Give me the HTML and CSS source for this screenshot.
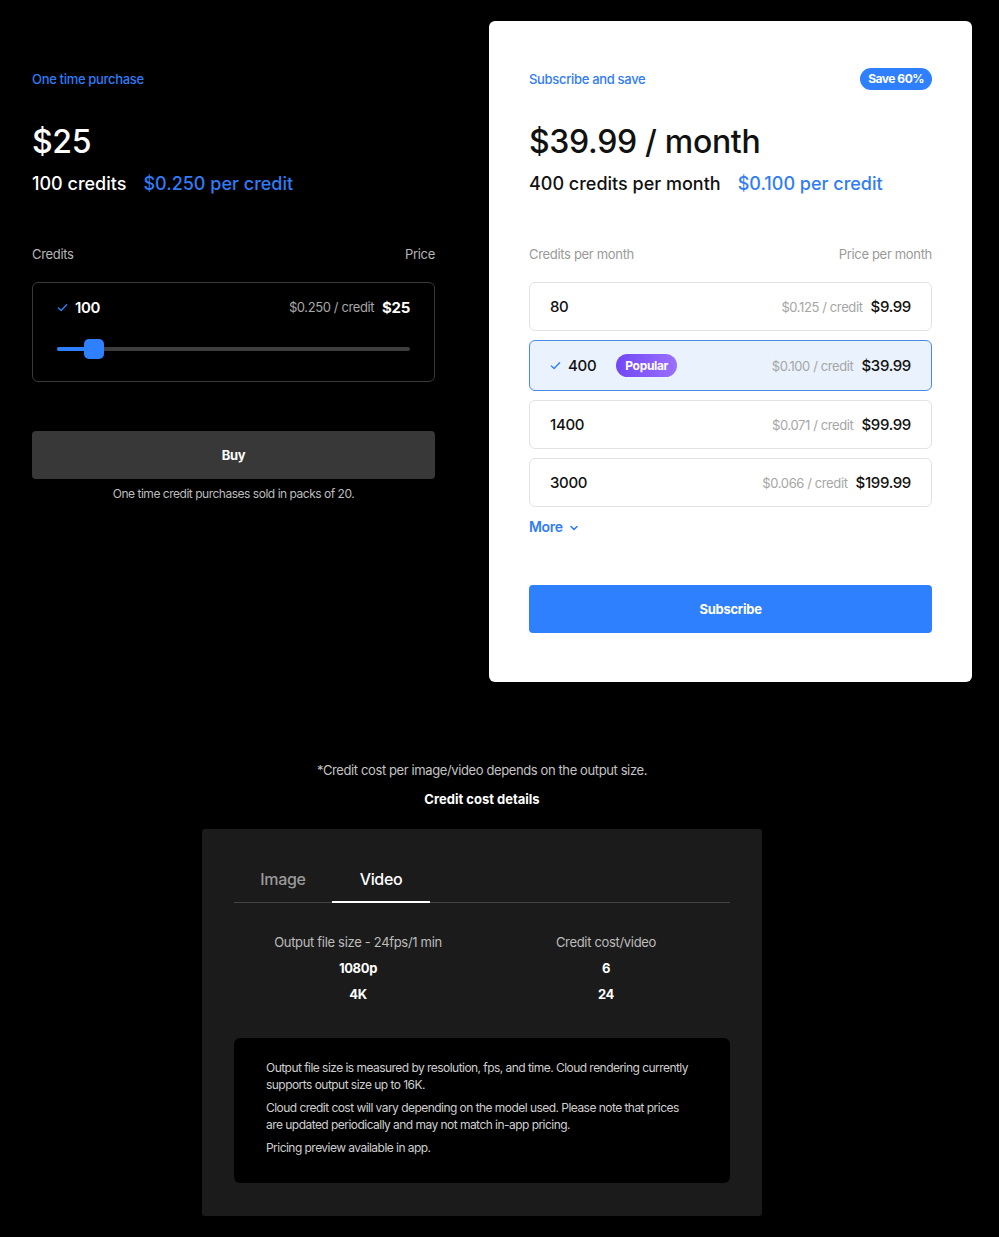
FILE: index.html
```html
<!DOCTYPE html>
<html lang="en">
<head>
<meta charset="utf-8">
<title>Pricing</title>
<link rel="stylesheet" href="styles.css">
</head>
<body>
<main class="page">
  <section class="plans">
    <div class="plan plan-once">
      <div class="plan-head">
        <span class="eyebrow">One time purchase</span>
      </div>
      <div class="price-big">$25</div>
      <div class="price-sub"><span class="qty">100 credits</span><span class="per">$0.250 per credit</span></div>
      <div class="labels"><span>Credits</span><span>Price</span></div>
      <div class="slider-box">
        <div class="slider-row">
          <span class="sel-left"><svg class="check" viewBox="0 0 12 12" width="11" height="11"><path d="M1.5 6.5 L4.5 9.2 L10.5 3" fill="none" stroke="currentColor" stroke-width="1.5" stroke-linecap="round" stroke-linejoin="round"/></svg><span class="num">100</span></span>
          <span class="sel-right"><span class="unit">$0.250 / credit</span><span class="amt">$25</span></span>
        </div>
        <div class="track"><div class="fill" style="width: 37px"></div><div class="thumb"></div></div>
      </div>
      <button class="btn btn-buy">Buy</button>
      <p class="pack-note">One time credit purchases sold in packs of 20.</p>
    </div>

    <div class="plan plan-sub">
      <div class="plan-head">
        <span class="eyebrow">Subscribe and save</span>
        <span class="save-pill">Save 60%</span>
      </div>
      <div class="price-big">$39.99 / month</div>
      <div class="price-sub"><span class="qty">400 credits per month</span><span class="per">$0.100 per credit</span></div>
      <div class="labels"><span>Credits per month</span><span>Price per month</span></div>
      <ul class="options">
        <li class="opt"><span class="sel-left"><span class="num">80</span></span><span class="sel-right"><span class="unit">$0.125 / credit</span><span class="amt">$9.99</span></span></li>
        <li class="opt opt-active"><span class="sel-left"><svg class="check" viewBox="0 0 12 12" width="11" height="11"><path d="M1.5 6.5 L4.5 9.2 L10.5 3" fill="none" stroke="currentColor" stroke-width="1.5" stroke-linecap="round" stroke-linejoin="round"/></svg><span class="num">400</span><span class="popular">Popular</span></span><span class="sel-right"><span class="unit">$0.100 / credit</span><span class="amt">$39.99</span></span></li>
        <li class="opt"><span class="sel-left"><span class="num">1400</span></span><span class="sel-right"><span class="unit">$0.071 / credit</span><span class="amt">$99.99</span></span></li>
        <li class="opt"><span class="sel-left"><span class="num">3000</span></span><span class="sel-right"><span class="unit">$0.066 / credit</span><span class="amt">$199.99</span></span></li>
      </ul>
      <div class="more">More <svg viewBox="0 0 10 10" width="10" height="10"><path d="M2 3.5 L5 6.5 L8 3.5" fill="none" stroke="currentColor" stroke-width="1.6" stroke-linecap="round" stroke-linejoin="round"/></svg></div>
      <button class="btn btn-sub">Subscribe</button>
    </div>
  </section>

  <section class="details">
    <p class="foot">*Credit cost per image/video depends on the output size.</p>
    <p class="details-title">Credit cost details</p>
    <div class="panel">
      <div class="tabs">
        <span class="tab">Image</span>
        <span class="tab tab-active">Video</span>
      </div>
      <div class="table">
        <span class="th">Output file size - 24fps/1 min</span><span class="th">Credit cost/video</span>
        <span class="td">1080p</span><span class="td">6</span>
        <span class="td">4K</span><span class="td">24</span>
      </div>
      <div class="note">
        <p>Output file size is measured by resolution, fps, and time. Cloud rendering currently supports output size up to 16K.</p>
        <p>Cloud credit cost will vary depending on the model used. Please note that prices are updated periodically and may not match in-app pricing.</p>
        <p>Pricing preview available in app.</p>
      </div>
    </div>
  </section>
</main>
</body>
</html>
```

FILE: styles.css
```css
* { box-sizing: border-box; }
html, body { margin: 0; padding: 0; background: #000; }
body {
  font-family: Inter, "Noto Sans", "Liberation Sans", sans-serif;
  color: #fff;
  letter-spacing: -0.02em;
}
p { margin: 0; }
ul { list-style: none; margin: 0; padding: 0; }

.page { width: 999px; padding-top: 21px; }

.plans {
  display: grid;
  grid-template-columns: 403px 483px;
  column-gap: 54px;
  padding-left: 32px;
  align-items: start;
}

.plan { padding-top: 47px; }
.plan-sub {
  background: #fff;
  color: #111;
  border-radius: 6px;
  padding: 47px 40px 49px;
}

.plan-head {
  display: flex;
  justify-content: space-between;
  align-items: center;
  height: 22px;
}
.eyebrow { font-size: 13px; color: #2f7cf6; font-weight: 500; }
.save-pill {
  background: #2f80ff;
  color: #fff;
  font-size: 12px;
  font-weight: 700;
  border-radius: 11px;
  height: 22px;
  line-height: 22px;
  padding: 0 8px;
  letter-spacing: -0.04em;
}

.price-big {
  margin-top: 32px;
  font-size: 32px;
  line-height: 40px;
  font-weight: 500;
  letter-spacing: -0.01em;
}
.price-sub {
  margin-top: 10px;
  font-size: 18px;
  line-height: 24px;
  font-weight: 500;
  display: flex;
  gap: 17px;
  letter-spacing: 0;
}
.price-sub .per { color: #2f7cf6; }

.labels {
  margin-top: 50px;
  display: flex;
  justify-content: space-between;
  font-size: 13px;
  line-height: 16px;
  color: #b5b5b5;
}
.plan-sub .labels { color: #9a9a9a; }

.slider-box {
  margin-top: 20px;
  height: 100px;
  border: 1px solid #3a3a3a;
  border-radius: 6px;
  padding: 14px 24px 0 24px;
}
.slider-row, .opt {
  display: flex;
  justify-content: space-between;
  align-items: center;
}
.slider-row { height: 20px; }
.sel-left { display: flex; align-items: center; }
.check { color: #2f80ff; margin-right: 7px; }
.num { font-size: 15px; font-weight: 600; }
.sel-right { display: flex; align-items: center; gap: 8px; }
.unit { font-size: 13px; color: #a8a8a8; letter-spacing: -0.03em; }
.amt { font-size: 15px; font-weight: 700; }

.track {
  position: relative;
  margin-top: 30px;
  height: 4px;
  border-radius: 2px;
  background: #3d3d3d;
}
.fill {
  height: 4px;
  border-radius: 2px;
  background: #2f80ff;
}
.thumb {
  position: absolute;
  left: 27px;
  top: -8px;
  width: 20px;
  height: 20px;
  border-radius: 5px;
  background: #2f80ff;
}

.btn {
  display: block;
  width: 100%;
  height: 48px;
  border: 0;
  border-radius: 4px;
  font-family: inherit;
  font-size: 13px;
  font-weight: 700;
  color: #fff;
  letter-spacing: -0.02em;
}
.btn-buy { margin-top: 49px; background: #383838; }
.pack-note {
  margin-top: 7px;
  text-align: center;
  font-size: 12px;
  color: #bdbdbd;
  letter-spacing: -0.04em;
}

.options { margin-top: 20px; display: flex; flex-direction: column; gap: 9px; }
.opt {
  height: 49px;
  border: 1px solid #e2e2e2;
  border-radius: 6px;
  padding: 0 20px;
}
.opt .num { font-weight: 500; color: #111; }
.opt .unit { color: #a6a6a6; }
.opt .amt { font-weight: 500; color: #111; }
.opt-active {
  height: 51px;
  background: #eaf2fd;
  border-color: #4a8ae6;
}
.popular {
  margin-left: 20px;
  height: 23px;
  line-height: 23px;
  padding: 0 9px;
  border-radius: 12px;
  background: linear-gradient(90deg, #7247f5, #9a70ff);
  color: #fff;
  font-size: 12px;
  font-weight: 700;
}

.more {
  margin-top: 10px;
  color: #2f7cf6;
  font-size: 14px;
  font-weight: 600;
  display: flex;
  align-items: center;
  gap: 6px;
  height: 18px;
}
.more svg { margin-top: 3px; }
.btn-sub { margin-top: 50px; background: #2f80ff; }

.details {
  width: 964px;
  display: flex;
  flex-direction: column;
  align-items: center;
  padding-top: 79px;
  padding-bottom: 22px;
}
.foot { font-size: 13px; line-height: 18px; color: #c4c4c4; letter-spacing: -0.03em; }
.details-title { margin-top: 11px; font-size: 13px; line-height: 18px; font-weight: 700; letter-spacing: 0; }

.panel {
  margin-top: 21px;
  width: 560px;
  background: #1b1b1b;
  border-radius: 3px;
  padding: 32px 32px 33px;
}
.tabs {
  display: flex;
  border-bottom: 1px solid #444;
}
.tab {
  width: 98px;
  text-align: center;
  font-size: 16px;
  line-height: 20px;
  padding: 8px 0 13px;
  color: #9a9a9a;
  font-weight: 500;
}
.tab-active { color: #fff; box-shadow: inset 0 -2px 0 #fff; margin-bottom: -1px; padding-bottom: 14px; }

.table {
  margin-top: 30px;
  display: grid;
  grid-template-columns: 1fr 1fr;
  row-gap: 8px;
  text-align: center;
  font-size: 13px;
  line-height: 18px;
}
.th { color: #bdbdbd; }
.td { font-weight: 700; }

.note {
  margin-top: 35px;
  background: #000;
  border-radius: 6px;
  padding: 22px 36px 26px 32px;
  font-size: 12px;
  line-height: 16.5px;
  color: #cfcfcf;
  letter-spacing: -0.045em;
}
.note p + p { margin-top: 7px; }
```
